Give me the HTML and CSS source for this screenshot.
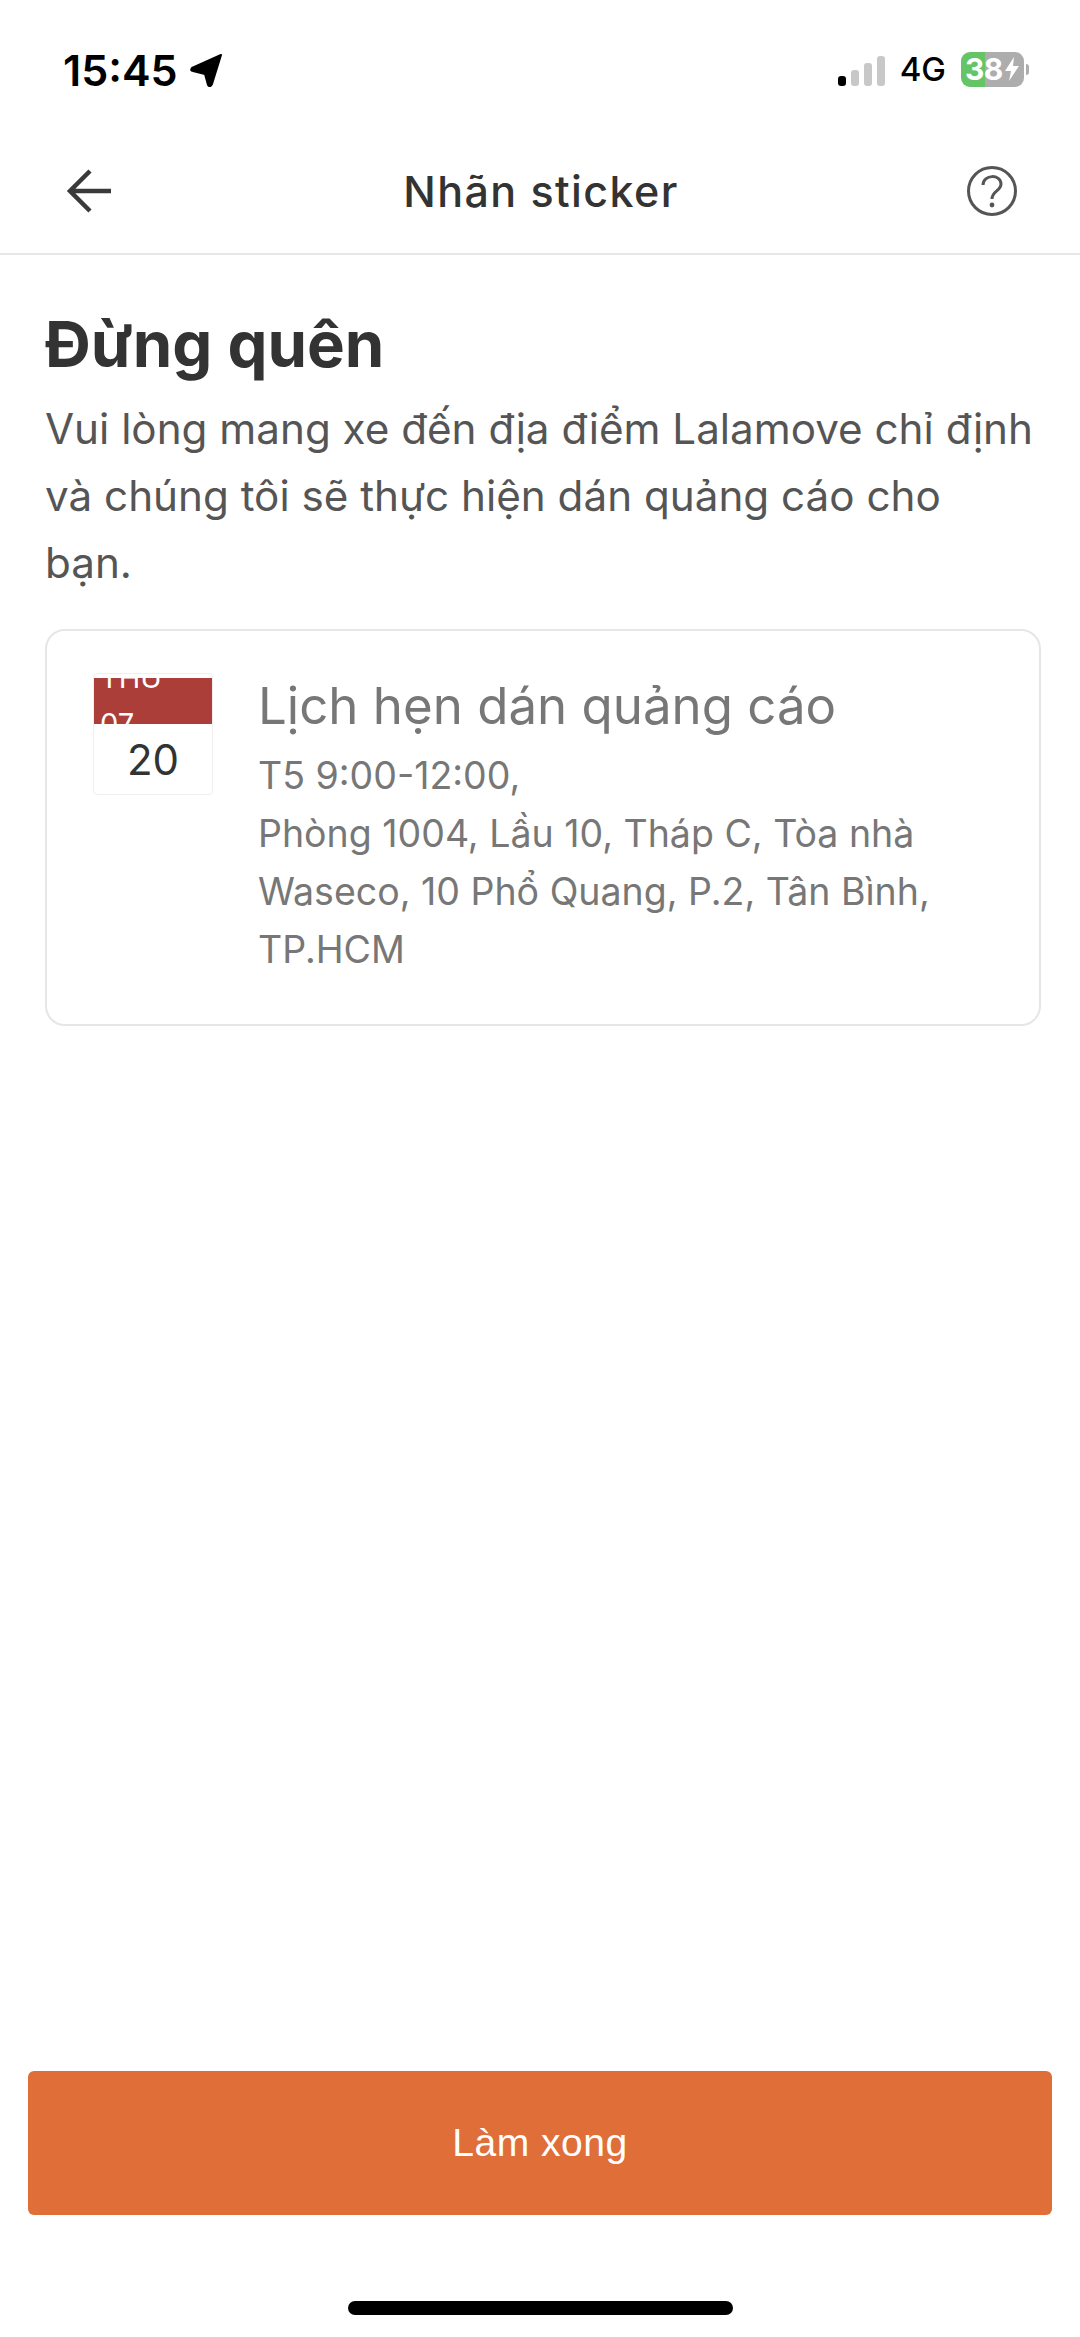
FILE: index.html
```html
<!DOCTYPE html>
<html>
<head>
    <title>Nhãn sticker</title>
    <meta charset="utf-8">
    <link rel="stylesheet" href="styles.css">
</head>
<body>
    <div class="screen">
        <div class="status-bar">
            <div class="status-left">
                <span class="time">15:45</span>
                <svg class="location" width="34" height="34" viewBox="0 0 34 34">
                    <path d="M32 2 L3 15 Q1 18 4 18 L16 21 L19 32 Q21 35 23 31 Z" fill="#000" stroke="#000" stroke-width="2" stroke-linejoin="round"/>
                </svg>
            </div>
            <div class="status-right">
                <div class="signal">
                    <span class="bar bar-1 on"></span>
                    <span class="bar bar-2"></span>
                    <span class="bar bar-3"></span>
                    <span class="bar bar-4"></span>
                </div>
                <span class="network">4G</span>
                <div class="battery">
                    <div class="battery-body">
                        <span>38</span>
                        <svg width="16" height="26" viewBox="0 0 16 26">
                            <path d="M10 1 L1 15 H7 L5 25 L15 10 H9 Z" fill="#fff"/>
                        </svg>
                    </div>
                    <span class="battery-nub"></span>
                </div>
            </div>
        </div>

        <div class="nav-bar">
            <svg class="nav-icon" width="50" height="50" viewBox="0 0 50 50">
                <path d="M46 25 H6 M25 5 L5 25 L25 45" fill="none" stroke="#3a3a3a" stroke-width="4.5"/>
            </svg>
            <h2 class="nav-title">Nhãn sticker</h2>
            <svg class="nav-icon" width="50" height="50" viewBox="0 0 50 50">
                <circle cx="25" cy="25" r="23.5" fill="none" stroke="#555" stroke-width="3"/>
                <path d="M16 19 C16 8 34 8 34 18 C34 25 25 25 25 33" fill="none" stroke="#555" stroke-width="3"/>
                <circle cx="25" cy="39" r="2.4" fill="#555"/>
            </svg>
        </div>

        <div class="content">
            <h1>Đừng quên</h1>
            <p class="intro">Vui lòng mang xe đến địa điểm Lalamove chỉ định và chúng tôi sẽ thực hiện dán quảng cáo cho bạn.</p>

            <div class="appointment-card">
                <div class="calendar">
                    <div class="calendar-head">
                        <span>THU</span>
                        <span>07</span>
                    </div>
                    <div class="calendar-day">20</div>
                </div>
                <div class="appointment-info">
                    <div class="appointment-title">Lịch hẹn dán quảng cáo</div>
                    <div class="appointment-detail">T5 9:00-12:00,<br>Phòng 1004, Lầu 10, Tháp C, Tòa nhà Waseco, 10 Phổ Quang, P.2, Tân Bình, TP.HCM</div>
                </div>
            </div>
        </div>

        <div class="footer">
            <button class="done-button">Làm xong</button>
            <div class="home-indicator"></div>
        </div>
    </div>
</body>
</html>
```

FILE: styles.css
```css
html, body {
    margin: 0;
    padding: 0;
    background: #fff;
}

body {
    font-family: 'Inter', 'Liberation Sans', sans-serif;
    color: #333;
}

.screen {
    width: 1080px;
    height: 2337px;
    display: flex;
    flex-direction: column;
    overflow: hidden;
}

.status-bar {
    height: 128px;
    padding: 48px 51px 0 63px;
    box-sizing: border-box;
    display: flex;
    justify-content: space-between;
    align-items: flex-start;
}

.status-left {
    display: flex;
    align-items: center;
    gap: 11px;
}

.time {
    font-size: 43px;
    line-height: 44px;
    font-weight: 600;
    color: #000;
}

.status-right {
    display: flex;
    align-items: center;
    gap: 15px;
    padding-top: 3px;
}

.signal {
    display: flex;
    align-items: flex-end;
    gap: 5px;
    height: 32px;
    margin-top: 2px;
}

.bar {
    width: 8px;
    background: #c8c8c8;
    border-radius: 3px;
}

.bar.on {
    background: #000;
}

.bar-1 { height: 10px; }
.bar-2 { height: 16px; }
.bar-3 { height: 23px; }
.bar-4 { height: 30px; }

.network {
    font-size: 33px;
    line-height: 36px;
    font-weight: 500;
    color: #000;
}

.battery {
    display: flex;
    align-items: center;
    gap: 2px;
}

.battery-body {
    width: 63px;
    height: 35px;
    padding-left: 4px;
    box-sizing: border-box;
    border-radius: 9px;
    background: linear-gradient(to right, #64c466 38%, #adadad 38%);
    display: flex;
    align-items: center;
    gap: 1px;
    color: #fff;
    font-size: 30px;
    font-weight: 700;
    letter-spacing: -0.5px;
}

.battery-nub {
    width: 3px;
    height: 11px;
    background: #adadad;
    border-radius: 0 3px 3px 0;
}

.nav-bar {
    height: 127px;
    box-sizing: border-box;
    border-bottom: 2px solid #e6e6e6;
    padding: 0 63px 0 65px;
    display: flex;
    align-items: center;
    justify-content: space-between;
}

.nav-title {
    margin: 0;
    font-size: 43px;
    font-weight: 500;
    letter-spacing: 1.4px;
    color: #333;
}

.content {
    flex: 1;
    padding: 52px 39px 0 45px;
}

h1 {
    margin: 0;
    font-size: 63.5px;
    line-height: 74px;
    font-weight: 700;
    color: #333;
}

.intro {
    margin: 14px 0 0;
    max-width: 990px;
    font-size: 42.2px;
    line-height: 67px;
    color: #555;
}

.appointment-card {
    margin-top: 33px;
    padding: 42px 40px 45px 46px;
    border: 2px solid #e6e6e6;
    border-radius: 20px;
    display: flex;
    align-items: flex-start;
    gap: 45px;
}

.calendar {
    width: 118px;
    height: 116px;
    flex-shrink: 0;
    padding-top: 4px;
    border: 1px solid #efefef;
    border-radius: 4px;
}

.calendar-head {
    height: 46px;
    padding-left: 6px;
    background: #ab3e38;
    color: #fff;
    font-size: 29px;
    line-height: 46px;
    overflow: hidden;
    display: flex;
    flex-direction: column;
    justify-content: center;
}

.calendar-day {
    height: 70px;
    font-size: 42px;
    line-height: 72px;
    text-align: center;
    color: #333;
}

.appointment-info {
    flex: 1;
    margin-top: 4px;
}

.appointment-title {
    font-size: 51px;
    line-height: 58px;
    color: #777;
}

.appointment-detail {
    margin-top: 12px;
    font-size: 37.5px;
    line-height: 58px;
    color: #777;
}

.footer {
    padding: 0 28px 22px;
    display: flex;
    flex-direction: column;
    align-items: center;
}

.done-button {
    width: 100%;
    height: 144px;
    border: none;
    border-radius: 6px;
    background: #df6e39;
    color: #fff;
    font-family: 'Liberation Sans', sans-serif;
    font-size: 39px;
    letter-spacing: 0.5px;
}

.home-indicator {
    width: 385px;
    height: 14px;
    margin-top: 86px;
    background: #000;
    border-radius: 7px;
}
```
